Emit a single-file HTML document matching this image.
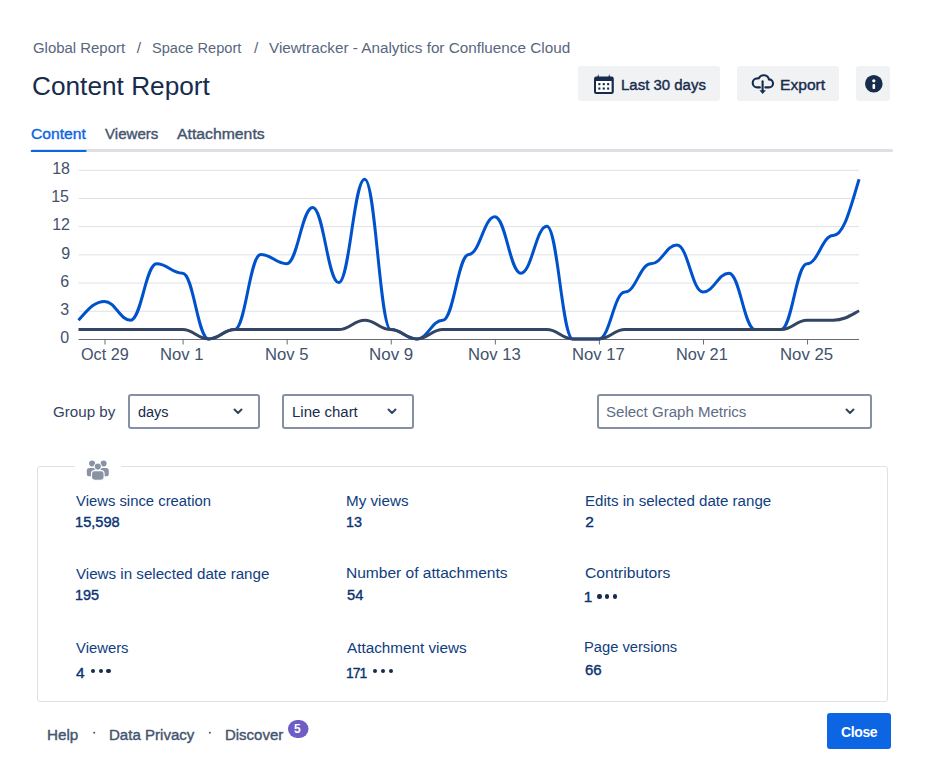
<!DOCTYPE html>
<html><head><meta charset="utf-8">
<style>
html,body{margin:0;padding:0;background:#fff;width:926px;height:774px;overflow:hidden;position:relative}
body{font-family:"Liberation Sans",sans-serif}
.t{position:absolute;white-space:pre;line-height:1;font-family:"Liberation Sans",sans-serif}
.a{position:absolute;box-sizing:border-box}
.btn{position:absolute;background:#F1F2F4;border-radius:3px}
.sel{position:absolute;box-sizing:border-box;border:2px solid #8590A2;border-radius:3px;background:#fff}
.dots{position:absolute}
.dots i{position:absolute;width:4.4px;height:4.4px;border-radius:50%;background:#172B4D;top:0}
</style></head><body>
<!-- header buttons -->
<div class="btn" style="left:578px;top:66px;width:142px;height:35px"></div>
<div class="btn" style="left:737px;top:66px;width:102px;height:35px"></div>
<div class="btn" style="left:856px;top:66px;width:34px;height:35px"></div>
<svg class="a" style="left:0;top:0" width="926" height="774" viewBox="0 0 926 774">
  <!-- calendar icon -->
  <g fill="#172B4D">
    <rect x="594" y="76.5" width="19.8" height="17.5" rx="2.2"/>
    <path d="M597.4,77 L598.2,73.9 L599,77 Z M608.4,77 L609.2,73.9 L610,77 Z"/>
  </g>
  <rect x="596" y="81" width="15.6" height="11" fill="#fff"/>
  <g fill="#172B4D">
    <rect x="598.3" y="83.1" width="2.1" height="2.1"/><rect x="602.7" y="83.1" width="2.1" height="2.1"/><rect x="607.1" y="83.1" width="2.1" height="2.1"/>
    <rect x="598.3" y="87.5" width="2.1" height="2.1"/><rect x="602.7" y="87.5" width="2.1" height="2.1"/><rect x="607.1" y="87.5" width="2.1" height="2.1"/>
  </g>
  <!-- cloud icon -->
  <g transform="translate(748,70)" fill="none" stroke="#172B4D" stroke-width="2.1" stroke-linecap="round">
    <path d="M11.9,17.4 H9.2 A4.5,4.5 0 0 1 9.2,8.4 L10.8,8.2 A5.5,5.5 0 0 1 21,9.4 A4,4 0 0 1 21,17.4 H17.4"/>
    <path d="M14.6,11.2 V20.5"/>
  </g>
  <path transform="translate(748,70)" d="M11.4,20.2 H17.9 L14.65,23.9 Z" fill="#172B4D"/>
  <!-- info icon -->
  <circle cx="873.8" cy="83.8" r="8.8" fill="#172B4D"/>
  <circle cx="873.8" cy="80.8" r="1.65" fill="#fff"/>
  <rect x="872.5" y="83.9" width="2.6" height="5.2" rx="1" fill="#fff"/>
  <!-- tab bar -->
  <rect x="31" y="149" width="862" height="3" rx="1.5" fill="#DCDFE4"/>
  <rect x="30.6" y="150" width="56" height="2" rx="1" fill="#0C66E4"/>
  <!-- chart grid -->
  <g stroke="#DFE1E6" stroke-width="1"><line x1='78.5' x2='859.1' y1='170.25' y2='170.25'/><line x1='78.5' x2='859.1' y1='198.45' y2='198.45'/><line x1='78.5' x2='859.1' y1='226.65' y2='226.65'/><line x1='78.5' x2='859.1' y1='254.85' y2='254.85'/><line x1='78.5' x2='859.1' y1='283.05' y2='283.05'/><line x1='78.5' x2='859.1' y1='311.25' y2='311.25'/></g>
  <line x1="78.5" x2="859.1" y1="339.5" y2="339.5" stroke="#666B73" stroke-width="1"/>
  <g stroke="#666B73" stroke-width="1"><line x1='105.02' x2='105.02' y1='340' y2='344.5'/><line x1='183.08' x2='183.08' y1='340' y2='344.5'/><line x1='287.16' x2='287.16' y1='340' y2='344.5'/><line x1='391.24' x2='391.24' y1='340' y2='344.5'/><line x1='495.32' x2='495.32' y1='340' y2='344.5'/><line x1='599.40' x2='599.40' y1='340' y2='344.5'/><line x1='703.48' x2='703.48' y1='340' y2='344.5'/><line x1='807.56' x2='807.56' y1='340' y2='344.5'/></g>
  <path d="M78.50,320.20C87.17,310.80 93.59,301.40 104.52,301.40C115.45,301.40 119.61,320.20 130.54,320.20C141.47,320.20 145.63,263.80 156.56,263.80C167.49,263.80 171.65,273.20 182.58,273.20C193.51,273.20 197.67,339.00 208.60,339.00C219.53,339.00 223.69,329.60 234.62,329.60C245.55,329.60 249.71,254.40 260.64,254.40C271.57,254.40 275.73,263.80 286.66,263.80C297.59,263.80 301.75,207.40 312.68,207.40C323.61,207.40 327.77,282.60 338.70,282.60C349.63,282.60 353.79,179.20 364.72,179.20C375.65,179.20 379.81,329.60 390.74,329.60C401.67,329.60 405.83,339.00 416.76,339.00C427.69,339.00 431.85,320.20 442.78,320.20C453.71,320.20 457.87,254.40 468.80,254.40C479.73,254.40 483.89,216.80 494.82,216.80C505.75,216.80 509.91,273.20 520.84,273.20C531.77,273.20 535.93,226.20 546.86,226.20C557.79,226.20 561.95,339.00 572.88,339.00C583.81,339.00 587.97,339.00 598.90,339.00C609.83,339.00 613.99,292.00 624.92,292.00C635.85,292.00 640.01,263.80 650.94,263.80C661.87,263.80 666.03,245.00 676.96,245.00C687.89,245.00 692.05,292.00 702.98,292.00C713.91,292.00 718.07,273.20 729.00,273.20C739.93,273.20 744.09,329.60 755.02,329.60C765.95,329.60 770.11,329.60 781.04,329.60C791.97,329.60 796.13,263.80 807.06,263.80C817.99,263.80 822.15,235.60 833.08,235.60C844.01,235.60 850.43,207.40 859.10,179.20" fill="none" stroke="#0052CC" stroke-width="3"/>
  <path d="M78.50,329.60C87.17,329.60 93.59,329.60 104.52,329.60C115.45,329.60 119.61,329.60 130.54,329.60C141.47,329.60 145.63,329.60 156.56,329.60C167.49,329.60 171.65,329.60 182.58,329.60C193.51,329.60 197.67,339.00 208.60,339.00C219.53,339.00 223.69,329.60 234.62,329.60C245.55,329.60 249.71,329.60 260.64,329.60C271.57,329.60 275.73,329.60 286.66,329.60C297.59,329.60 301.75,329.60 312.68,329.60C323.61,329.60 327.77,329.60 338.70,329.60C349.63,329.60 353.79,320.20 364.72,320.20C375.65,320.20 379.81,329.60 390.74,329.60C401.67,329.60 405.83,339.00 416.76,339.00C427.69,339.00 431.85,329.60 442.78,329.60C453.71,329.60 457.87,329.60 468.80,329.60C479.73,329.60 483.89,329.60 494.82,329.60C505.75,329.60 509.91,329.60 520.84,329.60C531.77,329.60 535.93,329.60 546.86,329.60C557.79,329.60 561.95,339.00 572.88,339.00C583.81,339.00 587.97,339.00 598.90,339.00C609.83,339.00 613.99,329.60 624.92,329.60C635.85,329.60 640.01,329.60 650.94,329.60C661.87,329.60 666.03,329.60 676.96,329.60C687.89,329.60 692.05,329.60 702.98,329.60C713.91,329.60 718.07,329.60 729.00,329.60C739.93,329.60 744.09,329.60 755.02,329.60C765.95,329.60 770.11,329.60 781.04,329.60C791.97,329.60 796.13,320.20 807.06,320.20C817.99,320.20 822.15,320.20 833.08,320.20C844.01,320.20 850.43,315.50 859.10,310.80" fill="none" stroke="#344563" stroke-width="3"/>
  <!-- badge -->
  <rect x="288" y="720" width="20.5" height="18" rx="9" fill="#6E5DC6"/>
  <!-- footer dots -->
  <circle cx="94.2" cy="732.8" r="1" fill="#44546F"/>
  <circle cx="209.9" cy="732.8" r="1" fill="#44546F"/>
</svg>
<!-- selects -->
<div class="sel" style="left:128px;top:394px;width:132px;height:35px"></div>
<div class="sel" style="left:282px;top:394px;width:132px;height:35px"></div>
<div class="sel" style="left:597px;top:394px;width:275px;height:35px"></div>
<!-- stats panel -->
<div class="a" style="left:37px;top:466px;width:851px;height:236px;border:1px solid #DFE1E6;border-radius:3px"></div>
<div class="a" style="left:75px;top:460px;width:46px;height:10px;background:#fff"></div>
<svg class="a" style="left:0;top:0" width="926" height="774">
  <!-- chevrons -->
  <g fill="none" stroke="#344563" stroke-width="2" stroke-linecap="round" stroke-linejoin="round">
    <path d="M234.5,409.5 L238,413 L241.5,409.5"/>
    <path d="M388.5,409.5 L392,413 L395.5,409.5"/>
    <path d="M846.5,409.5 L850,413 L853.5,409.5"/>
  </g>
  <g fill="#8993A4">
    <circle cx="92.1" cy="463.4" r="3"/>
    <circle cx="103.6" cy="463.4" r="3"/>
    <rect x="86.8" y="468.1" width="9" height="8.2" rx="2.6"/>
    <rect x="99.8" y="468.1" width="9" height="8.2" rx="2.6"/>
  </g>
  <g fill="#8993A4" stroke="#fff" stroke-width="1.1">
    <circle cx="97.8" cy="466.6" r="3.6"/>
    <rect x="91.5" y="470.6" width="12.6" height="9.6" rx="3"/>
  </g>
</svg>
<!-- dots -->
<div class="dots" style="left:0;top:0">
  <i style="left:597.3px;top:594.2px"></i><i style="left:605px;top:594.2px"></i><i style="left:612.7px;top:594.2px"></i>
  <i style="left:90.8px;top:669px"></i><i style="left:98.5px;top:669px"></i><i style="left:106.2px;top:669px"></i>
  <i style="left:373.1px;top:669px"></i><i style="left:380.8px;top:669px"></i><i style="left:388.5px;top:669px"></i>
</div>
<!-- close button -->
<div class="a" style="left:827px;top:713px;width:64px;height:36px;background:#0C66E4;border-radius:3px"></div>
<div class='t' style='left:33.40px;top:39.70px;font-size:15.5px;font-weight:400;color:#58667E;transform:scaleX(0.9625);transform-origin:0 0'>Global Report</div>
<div class='t' style='left:136.70px;top:39.70px;font-size:15.5px;font-weight:400;color:#58667E'>/</div>
<div class='t' style='left:152.26px;top:39.70px;font-size:15.5px;font-weight:400;color:#58667E;transform:scaleX(0.9426);transform-origin:0 0'>Space Report</div>
<div class='t' style='left:253.90px;top:39.70px;font-size:15.5px;font-weight:400;color:#58667E'>/</div>
<div class='t' style='left:269.40px;top:39.70px;font-size:15.5px;font-weight:400;color:#58667E;transform:scaleX(0.9856);transform-origin:0 0'>Viewtracker - Analytics for Confluence Cloud</div>
<div class='t' style='left:32.45px;top:73.60px;font-size:25px;font-weight:400;color:#172B4D;transform:scaleX(1.0491);transform-origin:0 0'>Content Report</div>
<div class='t' style='left:621.33px;top:77.00px;font-size:15.5px;font-weight:400;-webkit-text-stroke:0.4px currentColor;color:#172B4D;transform:scaleX(0.9655);transform-origin:0 0'>Last 30 days</div>
<div class='t' style='left:780.19px;top:77.00px;font-size:15.5px;font-weight:400;-webkit-text-stroke:0.4px currentColor;color:#172B4D;transform:scaleX(1.0068);transform-origin:0 0'>Export</div>
<div class='t' style='left:31.00px;top:125.80px;font-size:15.5px;font-weight:400;-webkit-text-stroke:0.4px currentColor;color:#0C66E4;transform:scaleX(1.0091);transform-origin:0 0'>Content</div>
<div class='t' style='left:104.70px;top:125.80px;font-size:15.5px;font-weight:400;-webkit-text-stroke:0.4px currentColor;color:#44546F;transform:scaleX(0.9727);transform-origin:0 0'>Viewers</div>
<div class='t' style='left:176.60px;top:125.80px;font-size:15.5px;font-weight:400;-webkit-text-stroke:0.4px currentColor;color:#44546F;transform:scaleX(1.0174);transform-origin:0 0'>Attachments</div>
<div class='t' style='left:52.20px;top:160.90px;font-size:16px;font-weight:400;color:#42526E'>18</div>
<div class='t' style='left:51.20px;top:189.10px;font-size:16px;font-weight:400;color:#42526E'>15</div>
<div class='t' style='left:52.20px;top:217.30px;font-size:16px;font-weight:400;color:#42526E'>12</div>
<div class='t' style='left:61.20px;top:245.50px;font-size:16px;font-weight:400;color:#42526E'>9</div>
<div class='t' style='left:60.20px;top:273.70px;font-size:16px;font-weight:400;color:#42526E'>6</div>
<div class='t' style='left:60.20px;top:301.90px;font-size:16px;font-weight:400;color:#42526E'>3</div>
<div class='t' style='left:60.20px;top:330.10px;font-size:16px;font-weight:400;color:#42526E'>0</div>
<div class='t' style='left:80.70px;top:346.60px;font-size:16px;font-weight:400;color:#42526E;transform:scaleX(1.0106);transform-origin:0 0'>Oct 29</div>
<div class='t' style='left:160.16px;top:346.60px;font-size:16px;font-weight:400;color:#42526E;transform:scaleX(1.0400);transform-origin:0 0'>Nov 1</div>
<div class='t' style='left:264.56px;top:346.60px;font-size:16px;font-weight:400;color:#42526E;transform:scaleX(1.0390);transform-origin:0 0'>Nov 5</div>
<div class='t' style='left:368.64px;top:346.60px;font-size:16px;font-weight:400;color:#42526E;transform:scaleX(1.0575);transform-origin:0 0'>Nov 9</div>
<div class='t' style='left:468.16px;top:346.60px;font-size:16px;font-weight:400;color:#42526E;transform:scaleX(1.0408);transform-origin:0 0'>Nov 13</div>
<div class='t' style='left:571.86px;top:346.60px;font-size:16px;font-weight:400;color:#42526E;transform:scaleX(1.0408);transform-origin:0 0'>Nov 17</div>
<div class='t' style='left:676.28px;top:346.60px;font-size:16px;font-weight:400;color:#42526E;transform:scaleX(1.0204);transform-origin:0 0'>Nov 21</div>
<div class='t' style='left:780.05px;top:346.60px;font-size:16px;font-weight:400;color:#42526E;transform:scaleX(1.0490);transform-origin:0 0'>Nov 25</div>
<div class='t' style='left:53.20px;top:403.60px;font-size:15.5px;font-weight:400;color:#344563;transform:scaleX(0.9781);transform-origin:0 0'>Group by</div>
<div class='t' style='left:138.10px;top:403.90px;font-size:15.5px;font-weight:400;color:#172B4D;transform:scaleX(0.9344);transform-origin:0 0'>days</div>
<div class='t' style='left:291.78px;top:403.60px;font-size:15.5px;font-weight:400;color:#172B4D;transform:scaleX(0.9664);transform-origin:0 0'>Line chart</div>
<div class='t' style='left:606.43px;top:403.90px;font-size:15.5px;font-weight:400;color:#5E6C84;transform:scaleX(0.9699);transform-origin:0 0'>Select Graph Metrics</div>
<div class='t' style='left:76.30px;top:492.60px;font-size:15.5px;font-weight:400;color:#0F3D80;transform:scaleX(0.9574);transform-origin:0 0'>Views since creation</div>
<div class='t' style='left:75.06px;top:514.30px;font-size:15.5px;font-weight:400;-webkit-text-stroke:0.4px currentColor;color:#0A3373;transform:scaleX(0.9435);transform-origin:0 0'>15,598</div>
<div class='t' style='left:345.72px;top:492.60px;font-size:15.5px;font-weight:400;color:#0F3D80;transform:scaleX(0.9806);transform-origin:0 0'>My views</div>
<div class='t' style='left:345.77px;top:514.30px;font-size:15.5px;font-weight:400;-webkit-text-stroke:0.4px currentColor;color:#0A3373;transform:scaleX(0.9250);transform-origin:0 0'>13</div>
<div class='t' style='left:584.63px;top:492.60px;font-size:15.5px;font-weight:400;color:#0F3D80;transform:scaleX(0.9732);transform-origin:0 0'>Edits in selected date range</div>
<div class='t' style='left:585.30px;top:514.30px;font-size:15.5px;font-weight:400;-webkit-text-stroke:0.4px currentColor;color:#0A3373'>2</div>
<div class='t' style='left:75.90px;top:565.50px;font-size:15.5px;font-weight:400;color:#0F3D80;transform:scaleX(0.9772);transform-origin:0 0'>Views in selected date range</div>
<div class='t' style='left:75.07px;top:586.90px;font-size:15.5px;font-weight:400;-webkit-text-stroke:0.4px currentColor;color:#0A3373;transform:scaleX(0.9320);transform-origin:0 0'>195</div>
<div class='t' style='left:345.80px;top:565.10px;font-size:15.5px;font-weight:400;color:#0F3D80;transform:scaleX(1.0025);transform-origin:0 0'>Number of attachments</div>
<div class='t' style='left:346.80px;top:586.90px;font-size:15.5px;font-weight:400;-webkit-text-stroke:0.4px currentColor;color:#0A3373;transform:scaleX(0.9471);transform-origin:0 0'>54</div>
<div class='t' style='left:584.75px;top:564.70px;font-size:15.5px;font-weight:400;color:#0F3D80;transform:scaleX(1.0101);transform-origin:0 0'>Contributors</div>
<div class='t' style='left:583.75px;top:588.50px;font-size:15.5px;font-weight:400;-webkit-text-stroke:0.4px currentColor;color:#0A3373'>1</div>
<div class='t' style='left:76.00px;top:640.10px;font-size:15.5px;font-weight:400;color:#0F3D80;transform:scaleX(0.9574);transform-origin:0 0'>Viewers</div>
<div class='t' style='left:76.10px;top:664.60px;font-size:15.5px;font-weight:400;-webkit-text-stroke:0.4px currentColor;color:#0A3373'>4</div>
<div class='t' style='left:346.80px;top:639.90px;font-size:15.5px;font-weight:400;color:#0F3D80;transform:scaleX(0.9851);transform-origin:0 0'>Attachment views</div>
<div class='t' style='left:345.60px;top:664.60px;font-size:15.5px;font-weight:400;-webkit-text-stroke:0.4px currentColor;color:#0A3373;transform:scaleX(0.9000);transform-origin:0 0;letter-spacing:-1.111px'>171</div>
<div class='t' style='left:583.80px;top:639.40px;font-size:15.5px;font-weight:400;color:#0F3D80;transform:scaleX(0.9490);transform-origin:0 0'>Page versions</div>
<div class='t' style='left:584.75px;top:661.50px;font-size:15.5px;font-weight:400;-webkit-text-stroke:0.4px currentColor;color:#0A3373;transform:scaleX(0.9676);transform-origin:0 0'>66</div>
<div class='t' style='left:46.62px;top:727.00px;font-size:15.5px;font-weight:400;-webkit-text-stroke:0.4px currentColor;color:#44546F;transform:scaleX(0.9806);transform-origin:0 0'>Help</div>
<div class='t' style='left:108.93px;top:726.60px;font-size:15.5px;font-weight:400;-webkit-text-stroke:0.4px currentColor;color:#44546F;transform:scaleX(0.9713);transform-origin:0 0'>Data Privacy</div>
<div class='t' style='left:224.63px;top:726.80px;font-size:15.5px;font-weight:400;-webkit-text-stroke:0.4px currentColor;color:#44546F;transform:scaleX(0.9650);transform-origin:0 0'>Discover</div>
<div class='t' style='left:840.80px;top:723.90px;font-size:15.5px;font-weight:700;color:#FFFFFF;transform:scaleX(0.9000);transform-origin:0 0;letter-spacing:-0.389px'>Close</div>
<div class="t" style="left:294px;top:722.5px;font-size:12px;font-weight:700;color:#fff">5</div>
</body></html>
